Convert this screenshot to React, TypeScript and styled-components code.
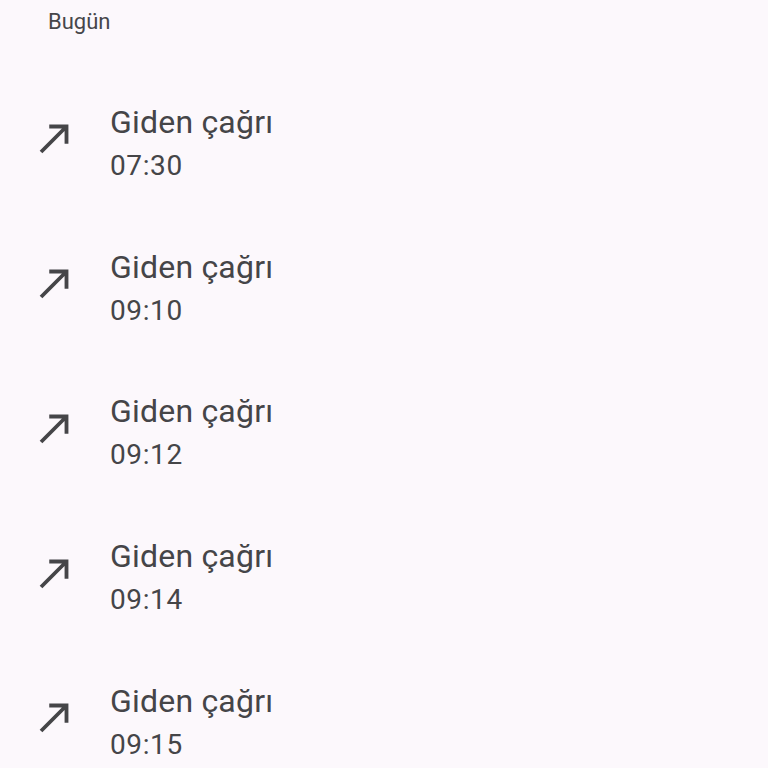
import * as React from 'react'
import styled, { createGlobalStyle } from 'styled-components'

const GlobalStyle = createGlobalStyle`
  html, body {
    margin: 0;
    padding: 0;
    background: #fcf8fc;
  }
  body {
    font-family: Roboto, "Noto Sans", sans-serif;
    color: #454548;
  }
`

const calls = ['07:30', '09:10', '09:12', '09:14', '09:15']

const OutgoingIcon = () => (
  <svg width="46" height="46" viewBox="0 0 24 24" fill="currentColor">
    <path d="M9 5v2h6.59L4 18.59 5.41 20 17 8.41V15h2V5z" />
  </svg>
)

export default function App() {
  return (
    <>
      <GlobalStyle />
      <Page>
        <SectionHeader>Bugün</SectionHeader>
        {calls.map((time) => (
          <CallRow key={time}>
            <IconBox>
              <OutgoingIcon />
            </IconBox>
            <CallText>
              <CallTitle>Giden çağrı</CallTitle>
              <CallTime>{time}</CallTime>
            </CallText>
          </CallRow>
        ))}
      </Page>
    </>
  )
}

const Page = styled.div`
  width: 768px;
  height: 768px;
  overflow: hidden;
  display: flex;
  flex-direction: column;
`

const SectionHeader = styled.div`
  box-sizing: border-box;
  height: 70px;
  flex-shrink: 0;
  padding: 8px 0 0 48px;
  font-size: 22px;
  line-height: 28px;
  color: #46464a;
`

const CallRow = styled.div`
  height: 144.75px;
  flex-shrink: 0;
  display: flex;
  align-items: center;
  gap: 32px;
  padding-left: 32px;
`

const IconBox = styled.div`
  display: flex;
  width: 46px;
  height: 46px;
  margin-bottom: 8px;
  color: #454548;
`

const CallText = styled.div`
  display: flex;
  flex-direction: column;
`

const CallTitle = styled.div`
  font-size: 32px;
  line-height: 40px;
  letter-spacing: 0.2px;
`

const CallTime = styled.div`
  margin-top: 7px;
  font-size: 28px;
  line-height: 34px;
  letter-spacing: 0.6px;
`
